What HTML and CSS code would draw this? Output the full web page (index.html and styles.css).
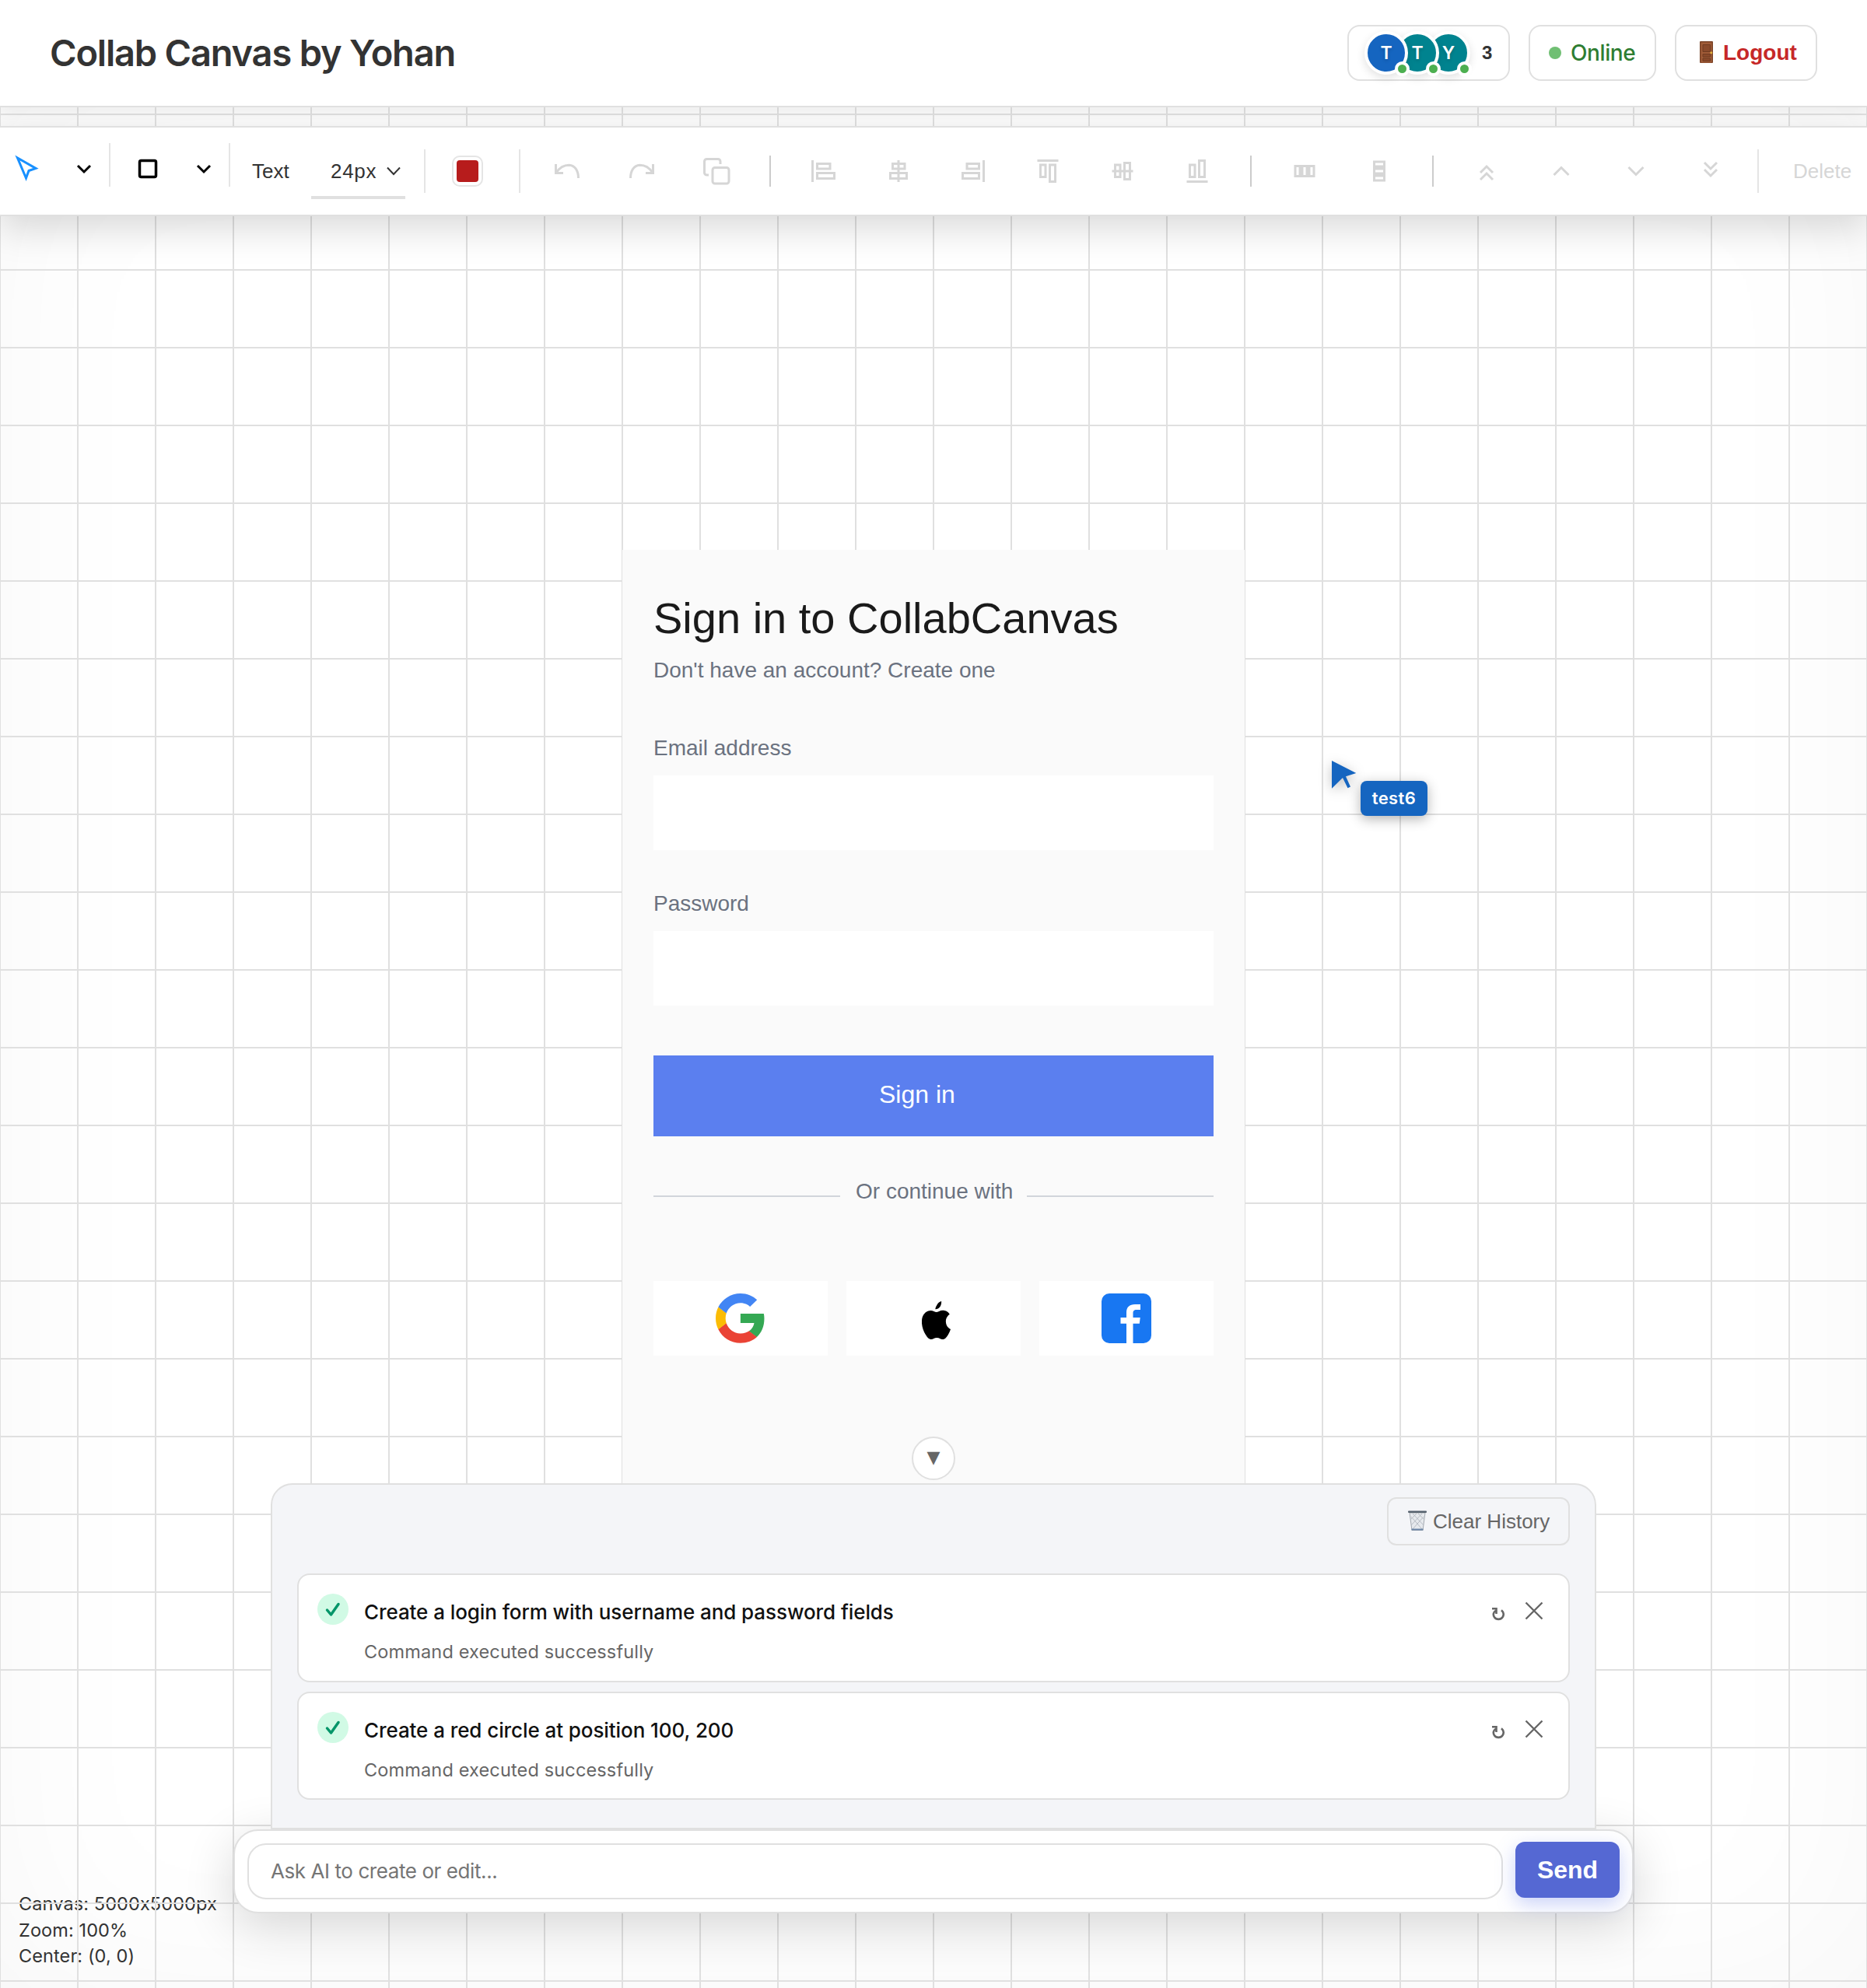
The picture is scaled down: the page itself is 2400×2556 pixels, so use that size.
FILE: index.html
```html
<!DOCTYPE html>
<html lang="en">
<head>
<meta charset="utf-8">
<title>Collab Canvas by Yohan</title>
<link rel="stylesheet" href="styles.css">
</head>
<body>
<header class="header">
  <h1 class="header-title">Collab Canvas by Yohan</h1>
  <div class="header-actions">
    <div class="pill users">
      <div class="avatars">
        <span class="avatar blue">T<i class="status"></i></span>
        <span class="avatar teal">T<i class="status"></i></span>
        <span class="avatar teal">Y<i class="status"></i></span>
      </div>
      <span class="user-count">3</span>
    </div>
    <div class="pill online"><i class="online-dot"></i><span class="online-label">Online</span></div>
    <button class="pill logout">
      <svg class="door" viewBox="0 0 17 28"><rect width="17" height="28" rx="1" fill="#7a4327"/><rect x="1.5" y="1.5" width="14" height="26" fill="#a15c38"/><path d="M4 4.5h9.500v9H4zM4 16.500h9.500v3.500H4zM4 22h9.500v3.500H4z" fill="#8a4a2b" stroke="#6f3a20"/><circle cx="14.800" cy="14.800" r="1.500" fill="#e3b23c"/></svg>
      <span class="logout-label">Logout</span>
    </button>
  </div>
</header>

<main class="workspace">
  <div class="info"><div>Canvas: 5000x5000px</div><div>Zoom: 100%</div><div>Center: (0, 0)</div></div>
  <div class="grid"></div>

  <nav class="toolbar">
    <button class="tool select-tool"><svg class="icon" viewBox="0 0 40 40"><path d="M7.500 6L31 19.500 22 22.500 18.500 32Z" stroke="#1890ff"/></svg></button>
    <button class="tool tool-arrow first"><svg class="icon" viewBox="0 0 40 40"><path d="M12 16L20 24 28 16" stroke="#000"/></svg></button>
    <i class="divider raised"></i>
    <button class="tool shape-tool"><svg class="icon" viewBox="0 0 40 40"><rect x="9.500" y="9.500" width="21" height="21" rx="2" stroke="#000" stroke-width="3.500"/></svg></button>
    <button class="tool tool-arrow"><svg class="icon" viewBox="0 0 40 40"><path d="M12 16L20 24 28 16" stroke="#000"/></svg></button>
    <i class="divider raised second"></i>
    <button class="text-tool"><span>Text</span></button>
    <div class="size-select"><span>24px</span><svg viewBox="0 0 18 12"><path d="M1 1.500L9 10 17 1.500"/></svg></div>
    <i class="divider after-size"></i>
    <button class="swatch"><i></i></button>
    <i class="divider after-swatch"></i>
    <button class="tool wide"><svg class="icon" viewBox="0 0 40 40"><path d="M5.500 11V22.500H15M6 22C11 14.500 17 12.200 22.500 12.200C30 12.500 34.500 19.500 34.500 29"/></svg></button>
    <button class="tool wide"><svg class="icon" viewBox="0 0 40 40"><path d="M34.500 11V22.500H25M34 22C29 14.500 23 12.200 17.500 12.200C10 12.500 5.500 19.500 5.500 29"/></svg></button>
    <button class="tool wide"><svg class="icon" viewBox="0 0 40 40"><rect x="15" y="15.500" width="21" height="20.500" rx="3"/><path d="M25 11V7.500a3 3 0 0 0-3-3H7.500a3 3 0 0 0-3 3V22a3 3 0 0 0 3 3H10"/></svg></button>
    <i class="divider short"></i>
    <button class="tool wide"><svg class="icon" viewBox="0 0 40 40"><path d="M5.500 6V34M11.500 10.500H28V17H11.500ZM11.500 22.500H33.500V29.500H11.500Z"/></svg></button>
    <button class="tool wide"><svg class="icon" viewBox="0 0 40 40"><path d="M20 6V34M12.500 10.500H28V17H12.500ZM9.500 22.500H30.500V29.500H9.500Z"/></svg></button>
    <button class="tool wide"><svg class="icon" viewBox="0 0 40 40"><path d="M33.500 6V34M12 10.500H27.500V17H12ZM6.500 22.500H27.500V29.500H6.500Z"/></svg></button>
    <button class="tool wide"><svg class="icon" viewBox="0 0 40 40"><path d="M6.500 6.500H33.500M10.500 12H17V27.500H10.500ZM22.500 12H29.500V33.500H22.500Z"/></svg></button>
    <button class="tool wide"><svg class="icon" viewBox="0 0 40 40"><path d="M6.500 20H33.500M10.500 12H17V27.500H10.500ZM22.500 9.500H29.500V30.500H22.500Z"/></svg></button>
    <button class="tool wide"><svg class="icon" viewBox="0 0 40 40"><path d="M6.500 33.500H33.500M10.500 12H17V27.500H10.500ZM22.500 6.500H29.500V27.500H22.500Z"/></svg></button>
    <i class="divider short"></i>
    <button class="tool wide"><svg class="icon" viewBox="0 0 40 40"><path d="M8 13.500H14V26.500H8ZM17 13.500H23V26.500H17ZM26 13.500H32V26.500H26Z"/></svg></button>
    <button class="tool wide"><svg class="icon" viewBox="0 0 40 40"><path d="M13.500 8V14H26.500V8ZM13.500 17V23H26.500V17ZM13.500 26V32H26.500V26Z"/></svg></button>
    <i class="divider short"></i>
    <button class="tool wide"><svg class="icon" viewBox="0 0 40 40"><path d="M12 22L20 14 28 22M12 31L20 23 28 31"/></svg></button>
    <button class="tool wide"><svg class="icon" viewBox="0 0 40 40"><path d="M10.500 25L20 15.500 29.500 25"/></svg></button>
    <button class="tool wide"><svg class="icon" viewBox="0 0 40 40"><path d="M10.500 15L20 24.500 29.500 15"/></svg></button>
    <button class="tool wide"><svg class="icon" viewBox="0 0 40 40"><path d="M12 9L20 17 28 9M12 18L20 26 28 18"/></svg></button>
    <i class="divider before-delete"></i>
    <button class="delete"><span>Delete</span></button>
  </nav>

  <section class="frame">
    <h2>Sign in to CollabCanvas</h2>
    <p class="subtitle">Don't have an account? Create one</p>
    <div class="field-label">Email address</div>
    <div class="field"></div>
    <div class="field-label password">Password</div>
    <div class="field"></div>
    <div class="signin">Sign in</div>
    <div class="or-row"><i></i><span>Or continue with</span><i></i></div>
    <div class="social">
      <div><svg class="google" viewBox="0 0 256 262"><path fill="#34a853" d="M255.878 133.451c0-10.734-.871-18.567-2.756-26.690H130.550v48.448h71.947c-1.450 12.040-9.283 30.172-26.690 42.356l-.244 1.622 38.755 30.023 2.685.268c24.659-22.774 38.875-56.282 38.875-96.027"/><path fill="#ea4335" d="M130.550 261.100c35.248 0 64.839-11.605 86.453-31.622l-41.196-31.913c-11.024 7.688-25.820 13.055-45.257 13.055-34.523 0-63.824-22.773-74.269-54.250l-1.531.13-40.298 31.187-.527 1.465C35.393 231.798 79.490 261.100 130.550 261.100"/><path fill="#fbbc05" d="M56.281 156.370c-2.756-8.123-4.351-16.827-4.351-25.820 0-8.994 1.595-17.697 4.206-25.820l-.073-1.730L15.260 71.312l-1.335.635C5.077 89.644 0 109.517 0 130.550s5.077 40.905 13.925 58.602l42.356-32.782"/><path fill="#4285f4" d="M130.550 50.479c24.514 0 41.050 10.589 50.479 19.438l36.844-35.974C195.245 12.910 165.798 0 130.550 0 79.490 0 35.393 29.301 13.925 71.947l42.211 32.783c10.590-31.477 39.891-54.251 74.414-54.251"/></svg></div>
      <div><svg class="apple" viewBox="3.900 2 16.200 20" preserveAspectRatio="none"><path d="M18.710 19.500C17.880 20.740 17 21.950 15.660 21.970C14.320 22 13.890 21.180 12.370 21.180C10.840 21.180 10.370 21.950 9.100 22C7.790 22.050 6.800 20.680 5.960 19.470C4.250 17 2.940 12.450 4.700 9.390C5.570 7.870 7.130 6.910 8.820 6.880C10.100 6.860 11.320 7.750 12.110 7.750C12.890 7.750 14.370 6.680 15.920 6.840C16.570 6.870 18.390 7.100 19.560 8.820C19.470 8.880 17.390 10.100 17.410 12.630C17.440 15.650 20.060 16.660 20.090 16.670C20.060 16.740 19.670 18.110 18.710 19.500M12.200 4.300C12.700 3.200 13.700 2.300 14.900 2C15 3.100 14.700 4.300 14 5.100C13.300 5.900 12.400 6.300 11.500 6.200C11.500 5.500 11.800 4.900 12.200 4.300Z"/></svg></div>
      <div><svg class="facebook" viewBox="0 0 64 64"><rect width="64" height="64" rx="10" fill="#1877f2"/><path fill="#fff" d="M32 64V38.700H24.500V31H32V24.500C32 17.500 36 14 43 14H50V21H45C41.500 21 40.500 22.500 40.500 25.500V31H49.700L48.800 38.700H40.500V64Z"/></svg></div>
    </div>
  </section>

  <div class="remote-cursor">
    <svg viewBox="0 0 32 36"><path d="M0 0L31.300 16 18 20.300 24 33.500 20.500 35.200 14 22 0 35.700Z" fill="#1565c0"/></svg>
    <span class="remote-name">test6</span>
  </div>

  <div class="dock">
    <button class="collapse">▼</button>
    <section class="history">
      <button class="clear">
        <svg class="trash" viewBox="0 0 24 26"><path d="M2 3H22L19 25.500H5Z" fill="#e6e9ed" stroke="#a3a9b0"/><path d="M4 8L18 24M6 4L20 19M13 4L21 12M20 8L6 24M18 4L4 19M11 4L3 12" stroke="#b1b7be" stroke-width=".9"/><rect x="0" y=".5" width="24" height="2.600" rx="1" fill="#56626e"/><path d="M4.500 24.500H19.500" stroke="#6c86a8" stroke-width="2"/></svg>
        <span class="clear-label">Clear History</span>
      </button>
      <article class="entry">
        <svg class="check" viewBox="0 0 40 40"><circle cx="20" cy="20" r="20" fill="#d1fae5"/><path d="M12.500 21L17.500 27 27 13.500" fill="none" stroke="#059669" stroke-width="3.500" stroke-linecap="round" stroke-linejoin="round"/></svg>
        <div class="entry-text"><div class="entry-title"><span>Create a login form with username and password fields</span></div><div class="entry-result"><span>Command executed successfully</span></div></div>
        <svg class="entry-icon retry" viewBox="0 0 18 18"><path d="M1 2.200H6.500V9M5.500 5C2.500 7 2 10.500 4 13.200C6.500 16.800 12 16.800 14.500 13.200C16.500 10 15.800 6.500 13 4.200"/></svg>
        <svg class="entry-icon remove" viewBox="0 0 24 24"><path d="M1.500 1.500L22.500 22.500M22.500 1.500L1.500 22.500"/></svg>
      </article>
      <article class="entry">
        <svg class="check" viewBox="0 0 40 40"><circle cx="20" cy="20" r="20" fill="#d1fae5"/><path d="M12.500 21L17.500 27 27 13.500" fill="none" stroke="#059669" stroke-width="3.500" stroke-linecap="round" stroke-linejoin="round"/></svg>
        <div class="entry-text"><div class="entry-title"><span>Create a red circle at position 100, 200</span></div><div class="entry-result"><span>Command executed successfully</span></div></div>
        <svg class="entry-icon retry" viewBox="0 0 18 18"><path d="M1 2.200H6.500V9M5.500 5C2.500 7 2 10.500 4 13.200C6.500 16.800 12 16.800 14.500 13.200C16.500 10 15.800 6.500 13 4.200"/></svg>
        <svg class="entry-icon remove" viewBox="0 0 24 24"><path d="M1.500 1.500L22.500 22.500M22.500 1.500L1.500 22.500"/></svg>
      </article>
    </section>
    <div class="prompt">
      <div class="prompt-input"><span>Ask AI to create or edit...</span></div>
      <button class="send">Send</button>
    </div>
  </div>
</main>
</body>
</html>
```
FILE: styles.css
```css
* { box-sizing: border-box; }
body {
  margin: 0;
  width: 2400px;
  height: 2556px;
  display: flex;
  flex-direction: column;
  overflow: hidden;
  background: #fff;
  font-family: Inter, "Noto Sans", sans-serif;
  color: #333;
}
button {
  margin: 0;
  padding: 0;
  border: 0;
  background: none;
  font-family: "Liberation Sans", Arial, sans-serif;
}
svg { display: block; flex: none; }

/* Header */
.header {
  flex: none;
  height: 138px;
  padding: 0 64px;
  display: flex;
  align-items: center;
  justify-content: space-between;
  background: #fff;
  border-bottom: 2px solid #e0e0e0;
  box-shadow: 0 4px 16px rgba(0, 0, 0, .06);
  position: relative;
  z-index: 2;
}
.header-title {
  margin: 0;
  font-size: 47px;
  font-weight: 600;
  letter-spacing: -1.200px;
  line-height: 60px;
}
.header-actions { display: flex; gap: 24px; }
.pill {
  height: 72px;
  display: flex;
  align-items: center;
  border: 2px solid #e0e0e0;
  border-radius: 16px;
  background: #fff;
}
.users { width: 209px; padding-left: 20px; }
.avatars { display: flex; }
.avatar {
  position: relative;
  width: 56px;
  height: 56px;
  margin-right: -16px;
  border: 4px solid #fff;
  border-radius: 50%;
  display: flex;
  align-items: center;
  justify-content: center;
  font-size: 23px;
  font-weight: 600;
  color: #fff;
  text-shadow: 0 2px 4px rgba(0, 0, 0, .2);
  box-shadow: 0 4px 12px rgba(0, 0, 0, .12);
}
.avatar:nth-child(1) { z-index: 3; }
.avatar:nth-child(2) { z-index: 2; }
.avatar:nth-child(3) { z-index: 1; }
.blue { background: #1565c0; }
.teal { background: #00838f; }
.status {
  position: absolute;
  right: -6px;
  bottom: -6px;
  width: 19px;
  height: 19px;
  border: 4px solid #fff;
  border-radius: 50%;
  background: #4caf50;
}
.user-count { margin-left: 31px; font: 700 24px "Liberation Sans", Arial, sans-serif; }
.online { width: 164px; padding-left: 24px; gap: 12px; }
.online-dot { width: 16px; height: 16px; border-radius: 50%; background: #70bf73; }
.online-label { font-size: 28px; font-weight: 500; letter-spacing: -.4px; color: #2e7d32; }
.logout { width: 183px; padding-left: 30px; gap: 13px; }
.door { width: 17px; height: 28px; margin-bottom: 2px; }
.logout-label { font-size: 28px; font-weight: 700; color: #c62828; }

/* Workspace */
.workspace {
  flex: 1;
  position: relative;
  padding-top: 24px;
  background: #fff;
  box-shadow: inset 0 0 240px rgba(0, 0, 0, .035);
}
.grid {
  position: absolute;
  inset: 0;
  background-image:
    linear-gradient(#e0e0e0 2px, transparent 2px),
    linear-gradient(90deg, #e0e0e0 2px, transparent 2px);
  background-size: 100px 100px;
  background-position: -1px 8px;
}
.info {
  position: absolute;
  left: 24px;
  bottom: 24px;
  font-size: 23.500px;
  line-height: 33.600px;
  letter-spacing: .1px;
}

/* Toolbar */
.toolbar {
  position: relative;
  z-index: 1;
  height: 116px;
  display: flex;
  align-items: center;
  background: #fff;
  border: solid #e0e0e0;
  border-width: 2px 0;
  box-shadow: 0 16px 48px rgba(0, 0, 0, .15);
}
.tool { flex: none; display: flex; align-items: center; justify-content: center; }
.icon {
  width: 40px;
  height: 40px;
  fill: none;
  stroke: #d6d6d6;
  stroke-width: 3;
}
.wide { width: 96px; }
.select-tool { width: 69px; padding-bottom: 6px; }
.tool-arrow { width: 48px; padding-bottom: 6px; }
.tool-arrow.first { width: 71px; padding-left: 7px; }
.shape-tool { width: 96px; padding-bottom: 6px; }
.divider { flex: none; width: 2px; height: 56px; background: #e5e5e5; }
.divider.raised { margin-bottom: 16px; }
.divider.second { margin-left: 8px; }
.divider.short { height: 40px; margin: 0 20px; background: #ccc; }
.after-size { margin-left: 24px; }
.after-swatch { margin: 0 12px 0 46px; }
.before-delete { margin: 0 0 0 12px; }
.text-tool {
  width: 76px;
  margin-left: 28px;
  text-align: left;
  font-size: 26px;
  color: #333;
}
.size-select {
  width: 121px;
  height: 72px;
  padding: 4px 6px 0 25px;
  display: flex;
  align-items: center;
  justify-content: space-between;
  border-bottom: 4px solid #e0e0e0;
  font-size: 26px;
  font-family: "Liberation Sans", Arial, sans-serif;
  letter-spacing: .7px;
}
.size-select svg { width: 18px; height: 12px; fill: none; stroke: #333; stroke-width: 2; }
.swatch {
  width: 40px;
  height: 40px;
  margin-left: 34px;
  padding: 4px;
  border: 2px solid #e5e5e5;
  border-radius: 10px;
}
.swatch i { display: block; width: 28px; height: 28px; border-radius: 4px; background: #b71c1c; }
.delete { margin-left: 44px; font-size: 26px; color: #d6d6d6; }

/* Frame drawn on the canvas */
.frame {
  position: absolute;
  left: 800px;
  top: 569px;
  width: 800px;
  height: 1300px;
  padding: 60px 40px 0;
  background: #fafafa;
  font-family: "Liberation Sans", Arial, sans-serif;
  font-size: 28px;
  line-height: 28px;
  color: #6b7280;
}
.frame h2 { margin: 0; font-size: 56px; line-height: 56px; font-weight: 400; color: #1a1a1a; }
.subtitle { margin: 25px 0 72px; }
.field-label { margin-bottom: 21px; }
.field-label.password { margin-top: 55px; }
.field { height: 96px; background: #fff; }
.signin {
  height: 104px;
  margin-top: 64px;
  padding: 34px 0 0 290px;
  background: #5b7fef;
  color: #fff;
  font-size: 32px;
  line-height: 32px;
}
.or-row { display: flex; margin-top: 57px; }
.or-row i { width: 240px; height: 2px; margin-top: 19px; background: #d1d5db; }
.or-row span { width: 240px; padding-left: 20px; }
.social { display: grid; grid-template-columns: repeat(3, 1fr); gap: 24px; margin-top: 101px; }
.social > div { height: 96px; background: #fff; }
.google { width: 62.500px; height: 64px; margin: 16px 0 0 80px; }
.apple { width: 37px; height: 49px; margin: 26px 0 0 97px; }
.facebook { width: 64px; height: 64px; margin: 16px 0 0 80px; }

.remote-cursor { position: absolute; left: 1712px; top: 840px; }
.remote-cursor svg { width: 32px; height: 36px; filter: drop-shadow(0 4px 8px rgba(0, 0, 0, .25)); overflow: visible; }
.remote-name {
  display: block;
  width: 86px;
  height: 45px;
  margin: -10px 0 0 37px;
  border-radius: 8px;
  background: #1565c0;
  box-shadow: 0 4px 16px rgba(0, 0, 0, .3);
  text-align: center;
  color: #fff;
  font-size: 22px;
  font-weight: 600;
  line-height: 44px;
  letter-spacing: .4px;
}

/* Assistant dock */
.dock {
  position: absolute;
  left: 300px;
  bottom: 96px;
  width: 1800px;
  display: flex;
  flex-direction: column;
  align-items: center;
}
.collapse {
  width: 56px;
  height: 56px;
  margin-bottom: 4px;
  padding-bottom: 2px;
  border: 2px solid #e0e0e0;
  border-radius: 50%;
  background: #fff;
  font: 22px/48px "DejaVu Sans", sans-serif;
  color: #666;
}
.history {
  position: relative;
  z-index: 1;
  width: 1704px;
  height: 445px;
  padding: 16px 32px 0;
  display: flex;
  flex-direction: column;
  border: 2px solid #e0e0e0;
  border-radius: 28px 28px 0 0;
  background: #f4f5f8;
}
.clear {
  align-self: flex-end;
  width: 235px;
  height: 62px;
  margin-bottom: 36px;
  padding-left: 25px;
  display: flex;
  align-items: center;
  gap: 8px;
  border: 2px solid #e0e0e0;
  border-radius: 12px;
  font-size: 26px;
  color: #666;
}
.trash { width: 24px; height: 26px; margin-bottom: 2px; fill: none; }
.entry {
  height: 139.500px;
  margin-bottom: 12px;
  padding: 24px 32px 0 24px;
  display: flex;
  border: 2px solid #e0e0e0;
  border-radius: 16px;
  background: #fff;
}
.check { width: 40px; height: 40px; }
.entry-text { flex: 1; padding-left: 20px; }
.entry-title { font-size: 26px; font-weight: 500; line-height: 47px; letter-spacing: -.08px; color: #111; }
.entry-result { margin-top: 6px; font-size: 23.500px; line-height: 44px; letter-spacing: .15px; color: #666; }
.entry-icon { fill: none; stroke: #666; }
.retry { width: 18px; height: 18px; margin: 17px 25px 0 0; stroke-width: 2.600; }
.remove { width: 24px; height: 24px; margin-top: 10px; stroke-width: 2.400; }
.prompt {
  width: 1800px;
  height: 108px;
  padding: 0 16px;
  display: flex;
  align-items: center;
  gap: 16px;
  border: 2px solid #e0e0e0;
  border-radius: 32px;
  background: #fff;
  box-shadow: 0 16px 64px rgba(0, 0, 0, .16);
}
.prompt-input {
  flex: 1;
  height: 72px;
  padding-left: 28px;
  border: 2px solid #e0e0e0;
  border-radius: 24px;
  font-size: 26px;
  line-height: 67px;
  letter-spacing: -.42px;
  color: #757575;
}
.send {
  width: 134px;
  height: 72px;
  margin-bottom: 4px;
  border-radius: 12px;
  background: #5568d3;
  box-shadow: 0 8px 24px rgba(102, 126, 234, .35);
  font-size: 32px;
  font-weight: 700;
  color: #fff;
}
```
